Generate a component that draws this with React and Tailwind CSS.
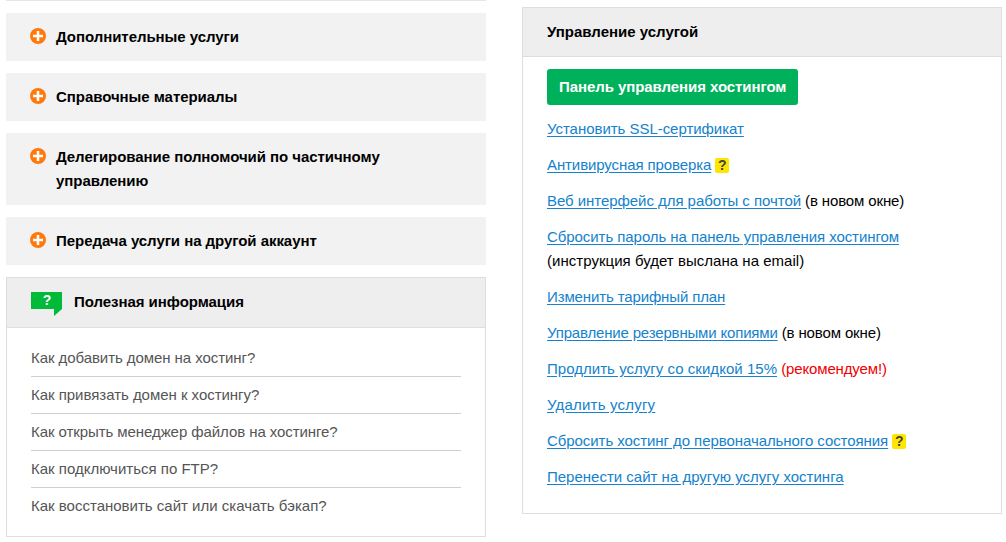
import React from "react";

const sections = [
  { title: "Дополнительные услуги" },
  { title: "Справочные материалы" },
  { title: "Делегирование полномочий по частичному управлению" },
  { title: "Передача услуги на другой аккаунт" },
];

const faq = [
  { text: "Как добавить домен на хостинг?", cls: "tracking-[-0.067px]" },
  { text: "Как привязать домен к хостингу?", cls: "tracking-[-0.03px]" },
  { text: "Как открыть менеджер файлов на хостинге?", cls: "tracking-[-0.075px]" },
  { text: "Как подключиться по FTP?", cls: "" },
  { text: "Как восстановить сайт или скачать бэкап?", cls: "" },
];

function PlusIcon() {
  return (
    <svg width="16" height="16" viewBox="0 0 16 16" className="shrink-0 mt-[3px]">
      <circle cx="8" cy="8" r="8" fill="#ff7a0d" />
      <rect x="3" y="6.75" width="10" height="2.5" fill="#fff" />
      <rect x="6.75" y="3" width="2.5" height="10" fill="#fff" />
    </svg>
  );
}

function HelpBadge() {
  return (
    <span className="inline-block w-[14px] h-[15px] ml-[4px] rounded-[2px] bg-[#ffe600] text-[#444] text-[14px] leading-[15px] font-bold text-center align-[0px]">
      ?
    </span>
  );
}

function ActionLink({ className = "", children }) {
  return <a href="#" className={`text-[#1482cc] underline underline-offset-[2px] ${className}`}>{children}</a>;
}

export default function App() {
  return (
    <div className="w-[1006px] h-[542px] overflow-hidden bg-white flex gap-[36px] pl-[6px] font-['Liberation_Sans',sans-serif] text-[15px] leading-[24px] text-black">
      <div className="w-[480px] shrink-0">
        <div className="h-px bg-[#e5e5e5] mb-[12px]"></div>
        {sections.map((s) => (
          <div key={s.title} className="bg-[#f2f2f2] mb-[12px] py-[12px] px-[24px] flex gap-[10px]">
            <PlusIcon />
            <div className="font-bold tracking-[-0.05px]">{s.title}</div>
          </div>
        ))}
        <div className="border border-[#dedede]">
          <div className="bg-[#eeeeee] border-b border-[#dedede] h-[50px] flex items-center pl-[24px] gap-[12px]">
            <svg width="31" height="24" viewBox="0 0 31 24" className="shrink-0 mt-[3px]">
              <path d="M0 0H31V17L23 24V17H0Z" fill="#00bb3a" />
              <text x="16" y="13" textAnchor="middle" fill="#fff" fontSize="14" fontWeight="700" fontFamily="Liberation Sans">?</text>
            </svg>
            <div className="font-bold tracking-[-0.05px] mb-[2px]">Полезная информация</div>
          </div>
          <div className="py-[12px] px-[24px]">
            {faq.map((q, i) => (
              <div key={q.text} className={`py-[6px] text-[#555] ${q.cls} ${i < faq.length - 1 ? "border-b border-[#cfcfcf]" : ""}`}>
                {q.text}
              </div>
            ))}
          </div>
        </div>
      </div>

      <div className="w-[480px] shrink-0 mt-[7px] h-[507px] border border-[#dedede]">
        <div className="bg-[#eeeeee] border-b border-[#dedede] h-[49px] flex items-center pl-[24px] font-bold">
          Управление услугой
        </div>
        <div className="pt-[12px] pb-[24px] px-[24px] flex flex-col gap-[12px] items-start">
          <a href="#" className="h-[36px] px-[12px] flex items-center rounded-[3px] bg-[#00b15c] text-white font-bold tracking-[-0.07px]">
            Панель управления хостингом
          </a>
          <div><ActionLink className="tracking-[-0.04px]">Установить SSL-сертификат</ActionLink></div>
          <div><ActionLink className="tracking-[-0.1px]">Антивирусная проверка</ActionLink><HelpBadge /></div>
          <div>
            <ActionLink className="tracking-[-0.05px]">Веб интерфейс для работы с почтой</ActionLink>
            <span className="tracking-[-0.13px]"> (в новом окне)</span>
          </div>
          <div>
            <ActionLink className="tracking-[-0.064px]">Сбросить пароль на панель управления хостингом</ActionLink>
            <br />
            <span className="tracking-[0.03px]">(инструкция будет выслана на email)</span>
          </div>
          <div><ActionLink className="tracking-[-0.13px]">Изменить тарифный план</ActionLink></div>
          <div>
            <ActionLink className="tracking-[-0.17px]">Управление резервными копиями</ActionLink>
            <span className="tracking-[-0.13px]"> (в новом окне)</span>
          </div>
          <div>
            <ActionLink className="tracking-[0.03px]">Продлить услугу со скидкой 15%</ActionLink>{" "}
            <span className="text-[#f00000] tracking-[-0.14px]">(рекомендуем!)</span>
          </div>
          <div><ActionLink className="tracking-[0.2px]">Удалить услугу</ActionLink></div>
          <div><ActionLink className="tracking-[-0.067px]">Сбросить хостинг до первоначального состояния</ActionLink><HelpBadge /></div>
          <div><ActionLink className="tracking-[0px]">Перенести сайт на другую услугу хостинга</ActionLink></div>
        </div>
      </div>
    </div>
  );
}
